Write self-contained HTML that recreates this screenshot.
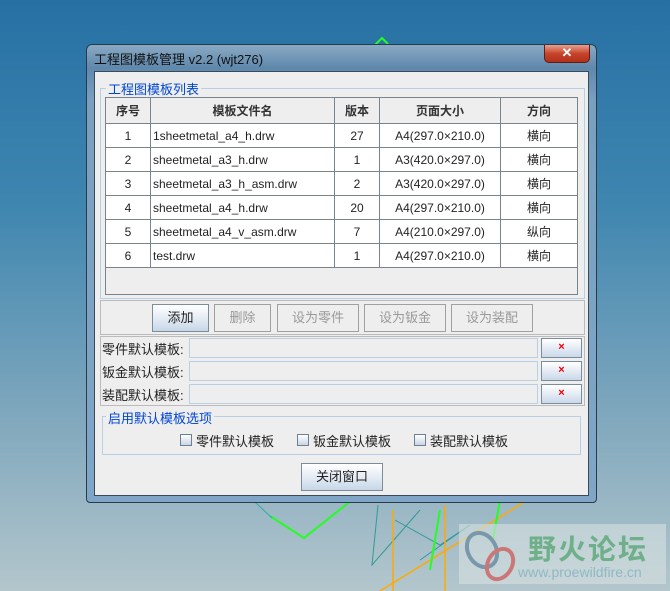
<!DOCTYPE html><html><head><meta charset="utf-8"><style>
*{margin:0;padding:0;box-sizing:border-box}
body{width:670px;height:591px;overflow:hidden;position:relative;background:linear-gradient(180deg,#2670a4 0%,#3f86b0 35%,#7fa7bd 70%,#b3c6cc 100%);font-family:"Liberation Sans","Noto Sans CJK SC",sans-serif;font-size:12px;color:#222}
.a{position:absolute}
.frame{left:86px;top:44px;width:511px;height:459px;border:1px solid #2b3a48;border-radius:6px 6px 4px 4px;background:linear-gradient(180deg,#8aaac4 0,#5f88ad 5%,#7aa0c0 12%,#7fa6c6 100%)}
.content{left:94px;top:71px;width:495px;height:425px;background:#eeeeee;border:1px solid #3c4a58}
.grp{border:1px solid #b8cfe4}
.lg{color:#0046d5;font-size:13px;background:#eee;padding:0 2px}
table{border-collapse:collapse;position:absolute;left:105px;top:97px;width:473px;background:#fff}
td{border:1px solid #7a848e;height:24px;text-align:center;font-size:12px}
th{border:1px solid #7a848e;height:26px;background:#eee;font-size:12px;font-weight:bold;color:#333}
td.l{text-align:left;padding-left:2px}
.btn{height:28px;border:1px solid #7d8c9a;background:linear-gradient(180deg,#fff 0,#dfe8f2 60%,#c6d6e8 100%);text-align:center;line-height:26px;font-size:13px}
.dis{border:1px solid #a0a0a0;background:#eee;color:#999}
.fld{height:20px;border:1px solid #b8cfe4;background:#eee}
.x{width:41px;height:20px;border:1px solid #7d8c9a;background:linear-gradient(180deg,#fff,#c9d8ea);color:#e00;text-align:center;line-height:17px;font-size:11px;font-weight:bold}
.lab{font-size:13px}
.cb{width:12px;height:12px;border:1px solid #6d7f92;background:linear-gradient(180deg,#fff,#c9d6e4)}
</style></head><body>
<svg class="a" style="left:0;top:0" width="670" height="591">
<path d="M375 45 L382 38 L388 44" stroke="#2f2" fill="none" stroke-width="2"/>
<path d="M270 516 L304 538 L352 500" stroke="#2f2" fill="none" stroke-width="2"/>
<path d="M255 502 L272 518" stroke="#3aa" fill="none"/>
<path d="M378 505 L372 565 L420 510 M395 520 L440 545 L470 525 L420 560" stroke="#399" fill="none"/>
<path d="M393 510 L393 591 M445 505 L445 591 M380 591 L560 480" stroke="#fa0" fill="none" stroke-width="1.5"/>
<path d="M440 510 L430 570 M500 500 L493 540" stroke="#2f2" fill="none" stroke-width="2"/>
</svg>
<div class="a" style="left:459px;top:524px;width:207px;height:60px;background:rgba(215,225,225,.6)"></div>
<div class="a" style="left:528px;top:528px;font-size:28px;font-weight:bold;color:#6fb08a;letter-spacing:2px">野火论坛</div>
<div class="a" style="left:518px;top:564px;font-size:14px;color:#8fb8c4">www.proewildfire.cn</div>
<svg class="a" style="left:462px;top:528px" width="60" height="56"><ellipse cx="20" cy="22" rx="14" ry="18" stroke="#7a98ac" stroke-width="4" fill="none" transform="rotate(-30 20 22)"/><ellipse cx="38" cy="36" rx="12" ry="16" stroke="#c77" stroke-width="4" fill="none" transform="rotate(30 38 36)"/></svg>
<div class="a frame"></div>
<div class="a" style="left:94px;top:49px;font-size:13px;color:#111">工程图模板管理 v2.2 (wjt276)</div>
<div class="a" style="left:544px;top:45px;width:46px;height:18px;border:1px solid #5a2018;border-top:none;border-radius:0 0 5px 5px;background:linear-gradient(180deg,#e8a090,#c8442c 50%,#b03018);color:#fff;text-align:center;font-weight:bold;font-size:13px;line-height:16px">✕</div>
<div class="a content"></div>
<div class="a grp" style="left:100px;top:88px;width:485px;height:211px"></div>
<div class="a lg" style="left:106px;top:79px">工程图模板列表</div>
<div class="a" style="left:105px;top:97px;width:473px;height:198px;border:1px solid #7a848e;background:#eee"></div>
<table>
<tr><th style="width:45px">序号</th><th style="width:184px">模板文件名</th><th style="width:45px">版本</th><th style="width:121px">页面大小</th><th>方向</th></tr>
<tr><td>1</td><td class="l">1sheetmetal_a4_h.drw</td><td>27</td><td>A4(297.0×210.0)</td><td>横向</td></tr>
<tr><td>2</td><td class="l">sheetmetal_a3_h.drw</td><td>1</td><td>A3(420.0×297.0)</td><td>横向</td></tr>
<tr><td>3</td><td class="l">sheetmetal_a3_h_asm.drw</td><td>2</td><td>A3(420.0×297.0)</td><td>横向</td></tr>
<tr><td>4</td><td class="l">sheetmetal_a4_h.drw</td><td>20</td><td>A4(297.0×210.0)</td><td>横向</td></tr>
<tr><td>5</td><td class="l">sheetmetal_a4_v_asm.drw</td><td>7</td><td>A4(210.0×297.0)</td><td>纵向</td></tr>
<tr><td>6</td><td class="l">test.drw</td><td>1</td><td>A4(297.0×210.0)</td><td>横向</td></tr>
</table>
<div class="a" style="left:100px;top:300px;width:485px;height:35px;border:1px solid #bbb"></div>
<div class="a btn" style="left:152px;top:304px;width:57px">添加</div>
<div class="a btn dis" style="left:214px;top:304px;width:57px">删除</div>
<div class="a btn dis" style="left:277px;top:304px;width:82px">设为零件</div>
<div class="a btn dis" style="left:364px;top:304px;width:82px">设为钣金</div>
<div class="a btn dis" style="left:451px;top:304px;width:82px">设为装配</div>
<div class="a" style="left:100px;top:336px;width:485px;height:70px;border:1px solid #bbb"></div>
<div class="a lab" style="left:102px;top:339px">零件默认模板:</div>
<div class="a lab" style="left:102px;top:362px">钣金默认模板:</div>
<div class="a lab" style="left:102px;top:385px">装配默认模板:</div>
<div class="a fld" style="left:189px;top:338px;width:349px"></div>
<div class="a fld" style="left:189px;top:361px;width:349px"></div>
<div class="a fld" style="left:189px;top:384px;width:349px"></div>
<div class="a x" style="left:541px;top:338px">×</div>
<div class="a x" style="left:541px;top:361px">×</div>
<div class="a x" style="left:541px;top:384px">×</div>
<div class="a grp" style="left:102px;top:416px;width:479px;height:39px"></div>
<div class="a lg" style="left:106px;top:408px">启用默认模板选项</div>
<div class="a cb" style="left:180px;top:434px"></div><div class="a lab" style="left:196px;top:431px">零件默认模板</div>
<div class="a cb" style="left:297px;top:434px"></div><div class="a lab" style="left:313px;top:431px">钣金默认模板</div>
<div class="a cb" style="left:414px;top:434px"></div><div class="a lab" style="left:430px;top:431px">装配默认模板</div>
<div class="a btn" style="left:301px;top:463px;width:82px">关闭窗口</div>
</body></html>
